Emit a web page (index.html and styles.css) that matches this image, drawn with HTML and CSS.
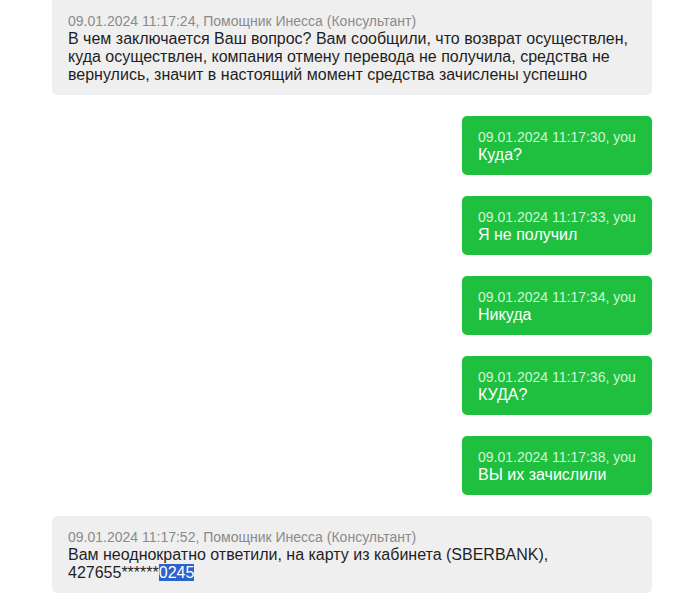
FILE: index.html
```html
<!DOCTYPE html>
<html lang="ru">
<head>
<meta charset="utf-8">
<link rel="stylesheet" href="styles.css">
</head>
<body>
<div class="chat">
  <div class="msg msg--agent msg--clipped">
    <div class="meta">09.01.2024 11:17:24, Помощник Инесса (Консультант)</div>
    <div class="text">В чем заключается Ваш вопрос? Вам сообщили, что возврат осуществлен, куда осуществлен, компания отмену перевода не получила, средства не вернулись, значит в настоящий момент средства зачислены успешно</div>
  </div>
  <div class="msg msg--me">
    <div class="meta">09.01.2024 11:17:30, you</div>
    <div class="text">Куда?</div>
  </div>
  <div class="msg msg--me">
    <div class="meta">09.01.2024 11:17:33, you</div>
    <div class="text">Я не получил</div>
  </div>
  <div class="msg msg--me">
    <div class="meta">09.01.2024 11:17:34, you</div>
    <div class="text">Никуда</div>
  </div>
  <div class="msg msg--me">
    <div class="meta">09.01.2024 11:17:36, you</div>
    <div class="text">КУДА?</div>
  </div>
  <div class="msg msg--me">
    <div class="meta">09.01.2024 11:17:38, you</div>
    <div class="text">ВЫ их зачислили</div>
  </div>
  <div class="msg msg--agent">
    <div class="meta">09.01.2024 11:17:52, Помощник Инесса (Консультант)</div>
    <div class="text">Вам неоднократно ответили, на карту из кабинета (SBERBANK), 427655******<span class="sel">0245</span></div>
  </div>
</div>
</body>
</html>
```

FILE: styles.css
```css
html, body {
  margin: 0;
  padding: 0;
  background: #ffffff;
}
body {
  font-family: "Liberation Sans", Arial, sans-serif;
  color: #1f1f1f;
  overflow: hidden;
}
.chat {
  width: 600px;
  margin-left: 52px;
  display: flex;
  flex-direction: column;
  align-items: flex-start;
  gap: 21px;
}
.msg {
  box-sizing: border-box;
  padding: 13px 16px 11px;
  border-radius: 5px;
}
.msg--clipped {
  margin-top: -8px;
  padding-top: 21px;
}
.msg--agent {
  width: 600px;
  background: #f0eff0;
}
.msg--me {
  align-self: flex-end;
  width: 190px;
  background: #1fc03f;
  color: #ffffff;
}
.meta {
  font-size: 14px;
  line-height: 17px;
  color: #8a8a8a;
}
.msg--me .meta {
  color: #d2f5d8;
}
.text {
  font-size: 16px;
  line-height: 18px;
}
.sel {
  background: #2d62cc;
  color: #ffffff;
}
```
